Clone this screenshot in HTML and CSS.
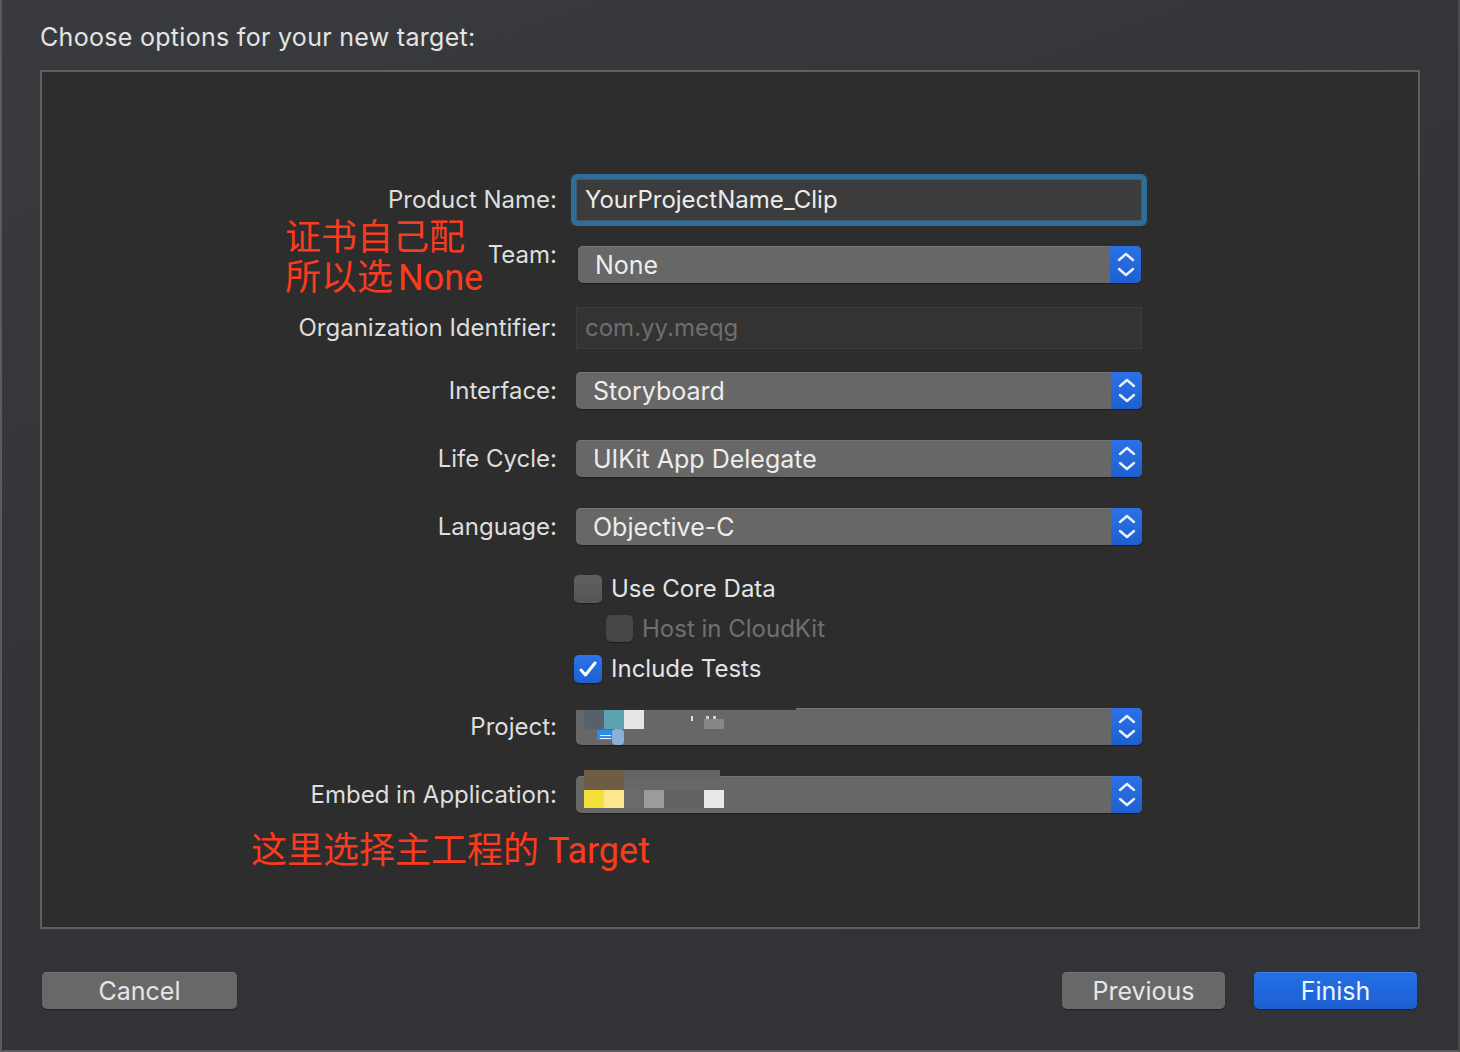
FILE: index.html
```html
<!DOCTYPE html>
<html lang="en">
<head>
    <meta charset="UTF-8">
    <meta name="viewport" content="width=device-width, initial-scale=1.0">
    <title>New Target</title>
    <link rel="stylesheet" href="styles.css">
</head>
<body>

<div class="sheet">
    <h1 class="sheet-title">Choose options for your new target:</h1>

    <div class="options-box">
        <div class="options-form">
            <div class="row row-field">
                <label class="row-label">Product Name:</label>
                <div class="text-field focused">YourProjectName_Clip</div>
            </div>

            <div class="row row-team">
                <label class="row-label label-raised">Team:</label>
                <div class="popup popup-team">
                    <span class="popup-value">None</span>
                    <span class="popup-arrows"><svg viewBox="0 0 31 37" width="31" height="37"><polyline points="9,14 16,8 23,14"/><polyline points="9,23 16,29 23,23"/></svg></span>
                </div>
            </div>

            <div class="row row-org">
                <label class="row-label">Organization Identifier:</label>
                <div class="text-field placeholder">com.yy.meqg</div>
            </div>

            <div class="row row-interface">
                <label class="row-label">Interface:</label>
                <div class="popup">
                    <span class="popup-value">Storyboard</span>
                    <span class="popup-arrows"><svg viewBox="0 0 31 37" width="31" height="37"><polyline points="9,14 16,8 23,14"/><polyline points="9,23 16,29 23,23"/></svg></span>
                </div>
            </div>

            <div class="row">
                <label class="row-label">Life Cycle:</label>
                <div class="popup">
                    <span class="popup-value">UIKit App Delegate</span>
                    <span class="popup-arrows"><svg viewBox="0 0 31 37" width="31" height="37"><polyline points="9,14 16,8 23,14"/><polyline points="9,23 16,29 23,23"/></svg></span>
                </div>
            </div>

            <div class="row">
                <label class="row-label">Language:</label>
                <div class="popup">
                    <span class="popup-value">Objective-C</span>
                    <span class="popup-arrows"><svg viewBox="0 0 31 37" width="31" height="37"><polyline points="9,14 16,8 23,14"/><polyline points="9,23 16,29 23,23"/></svg></span>
                </div>
            </div>

            <div class="row row-check row-check-first">
                <span></span>
                <div class="checkbox-line">
                    <span class="checkbox"></span>
                    <span>Use Core Data</span>
                </div>
            </div>

            <div class="row row-check row-check-sub">
                <span></span>
                <div class="checkbox-line disabled indented">
                    <span class="checkbox"></span>
                    <span>Host in CloudKit</span>
                </div>
            </div>

            <div class="row row-check row-check-last">
                <span></span>
                <div class="checkbox-line">
                    <span class="checkbox checked"><svg viewBox="0 0 28 28" width="28" height="28"><polyline points="7,15 11.5,20 21,8"/></svg></span>
                    <span>Include Tests</span>
                </div>
            </div>

            <div class="row row-project">
                <label class="row-label">Project:</label>
                <div class="popup">
                    <svg class="masked" viewBox="0 0 240 37" width="240" height="37">
                        <rect x="0" y="-1" width="220" height="3" fill="#2f2f2f"/>
                        <rect x="8" y="2" width="20" height="19" rx="4" fill="#56616c"/>
                        <rect x="28" y="2" width="20" height="19" fill="#5aa3ae"/>
                        <rect x="48" y="2" width="20" height="19" fill="#e6e6e8"/>
                        <rect x="21" y="22" width="16" height="10" fill="#2f8be8"/>
                        <rect x="24" y="27" width="11" height="1" fill="#e6f0ff"/>
                        <rect x="24" y="30" width="11" height="1" fill="#e6f0ff"/>
                        <rect x="36" y="21" width="12" height="16" rx="4" fill="#8bb0d6"/>
                        <rect x="115" y="8" width="2" height="5" fill="#e0e0e0"/>
                        <rect x="130" y="8" width="3" height="3" fill="#cfcfcf"/>
                        <rect x="137" y="8" width="3" height="3" fill="#cfcfcf"/>
                        <rect x="128" y="11" width="20" height="10" fill="#878787"/>
                    </svg>
                    <span class="popup-arrows"><svg viewBox="0 0 31 37" width="31" height="37"><polyline points="9,14 16,8 23,14"/><polyline points="9,23 16,29 23,23"/></svg></span>
                </div>
            </div>

            <div class="row row-embed">
                <label class="row-label">Embed in Application:</label>
                <div class="popup">
                    <svg class="masked" viewBox="0 -6 240 43" width="240" height="43">
                        <rect x="48" y="-6" width="96" height="8" fill="#636363"/>
                        <rect x="8" y="-6" width="40" height="20" fill="#6e5c45"/>
                        <rect x="8" y="14" width="20" height="18" fill="#f5dd3a"/>
                        <rect x="28" y="14" width="20" height="18" fill="#fde68e"/>
                        <rect x="48" y="14" width="20" height="18" fill="#6a6a6a"/>
                        <rect x="68" y="14" width="20" height="18" fill="#9b9b9b"/>
                        <rect x="88" y="14" width="40" height="18" fill="#626262"/>
                        <rect x="128" y="14" width="20" height="18" fill="#e8e8ea"/>
                    </svg>
                    <span class="popup-arrows"><svg viewBox="0 0 31 37" width="31" height="37"><polyline points="9,14 16,8 23,14"/><polyline points="9,23 16,29 23,23"/></svg></span>
                </div>
            </div>
        </div>

        <!-- annotations drawn over the screenshot -->
        <div class="note note-team">证书自己配<br>所以选<span class="note-latin">None</span></div>
        <div class="note note-embed">这里选择主工程的 Target</div>
    </div>

    <div class="sheet-footer">
        <button class="btn btn-cancel">Cancel</button>
        <div class="footer-right">
            <button class="btn btn-previous">Previous</button>
            <button class="btn btn-primary">Finish</button>
        </div>
    </div>
</div>

</body>
</html>
```

FILE: styles.css
```css
body {
    margin: 0;
    background-color: #333538;
    font-family: Inter, "Noto Sans", sans-serif;
    color: #e2e2e2;
}
.sheet {
    box-sizing: border-box;
    width: 1460px;
    height: 1052px;
    padding: 0 38px;
    border-left: 2px solid #5a5b5d;
    border-right: 2px solid #4a4b4d;
    border-bottom: 2px solid #5a5b5d;
    background: linear-gradient(160deg, #3a3b3e 0%, #333437 45%, #323336 100%);
}
.sheet-title {
    margin: 0;
    padding-top: 22px;
    font-size: 25px;
    font-weight: 400;
    line-height: 30px;
    letter-spacing: 0.3px;
    color: #e4e4e4;
}
.options-box {
    position: relative;
    box-sizing: border-box;
    height: 859px;
    margin-top: 18px;
    border: 2px solid #5f5f60;
    background-color: #2d2d2d;
}
.options-form {
    display: flex;
    flex-direction: column;
    padding-top: 107px;
}
.row {
    display: grid;
    grid-template-columns: 515px 566px;
    column-gap: 19px;
    align-items: center;
    margin-top: 31px;
}
.row-field { margin-top: 0; }
.row-team { margin-top: 25px; }
.row-org { margin-top: 24px; }
.row-interface { margin-top: 23px; }
.row-check-first { margin-top: 30px; }
.row-check-sub { margin-top: 12px; }
.row-check-last { margin-top: 13px; }
.row-project { margin-top: 25px; }
.row-label {
    text-align: right;
    font-size: 24px;
    line-height: 30px;
    color: #dedede;
}
.label-raised {
    position: relative;
    top: -10px;
}
.text-field {
    box-sizing: border-box;
    height: 42px;
    padding: 0 8px;
    font-size: 24px;
    line-height: 40px;
    border: 1px solid #3d3d3d;
    background-color: #333333;
}
.text-field.focused {
    background-color: #3c3c3c;
    color: #ececec;
    border-color: #3f5a6e;
    border-radius: 2px;
    box-shadow: 0 0 0 5px #2f6c98;
}
.text-field.placeholder {
    color: #6e6e6e;
}
.popup {
    position: relative;
    box-sizing: border-box;
    height: 37px;
    display: flex;
    align-items: center;
    border-radius: 5px;
    background-color: #676767;
    box-shadow: inset 0 1px 0 #757575, 0 1px 1px rgba(0, 0, 0, 0.35);
}
.popup-team {
    margin-left: 2px;
    margin-right: 1px;
}
.popup-value {
    padding-left: 17px;
    font-size: 25px;
    color: #ededed;
}
.popup-arrows {
    margin-left: auto;
    width: 31px;
    height: 37px;
    border-radius: 0 5px 5px 0;
    background: linear-gradient(#2b72e6, #1f5fcf);
}
.popup-arrows svg {
    display: block;
}
.popup-arrows polyline {
    fill: none;
    stroke: #eaf1ff;
    stroke-width: 2.4;
    stroke-linecap: round;
    stroke-linejoin: round;
}
.masked {
    position: absolute;
    left: 0;
    bottom: 0;
    overflow: visible;
}
.checkbox-line {
    display: flex;
    align-items: center;
    gap: 9px;
    height: 28px;
    margin-left: -2px;
    font-size: 24px;
    line-height: 28px;
    color: #e4e4e4;
}
.checkbox-line.indented {
    height: 27px;
    margin-left: 30px;
}
.checkbox-line.disabled {
    color: #707070;
}
.checkbox {
    box-sizing: border-box;
    width: 28px;
    height: 28px;
    border-radius: 5px;
    background: linear-gradient(#5f5f5f, #555555);
    box-shadow: 0 1px 1px rgba(0, 0, 0, 0.4);
}
.disabled .checkbox {
    width: 27px;
    height: 27px;
    background: #464646;
}
.checkbox.checked {
    background: linear-gradient(#2c74e8, #1f60d0);
}
.checkbox svg {
    display: block;
}
.checkbox polyline {
    fill: none;
    stroke: #ffffff;
    stroke-width: 3;
    stroke-linecap: round;
    stroke-linejoin: round;
}
.note {
    position: absolute;
    font-family: Roboto, "Noto Sans CJK SC", sans-serif;
    font-size: 36px;
    line-height: 40px;
    color: #fb3b1d;
}
.note-latin {
    margin-left: 5px;
}
.note-team {
    left: 243px;
    top: 146px;
}
.note-embed {
    left: 209px;
    top: 759px;
}
.sheet-footer {
    display: flex;
    justify-content: space-between;
    margin-top: 43px;
    padding: 0 3px 0 2px;
}
.footer-right {
    display: flex;
    gap: 29px;
}
.btn {
    box-sizing: border-box;
    height: 37px;
    border: none;
    border-radius: 5px;
    font-family: Inter, "Noto Sans", sans-serif;
    font-size: 25px;
    color: #e6e6e6;
    background-color: #686868;
    box-shadow: inset 0 1px 0 #747474, 0 1px 1px rgba(0, 0, 0, 0.35);
    cursor: pointer;
}
.btn-cancel {
    width: 195px;
}
.btn-previous {
    width: 163px;
}
.btn-primary {
    width: 163px;
    color: #f2f6ff;
    background: linear-gradient(#2370e6, #1d5fd2);
    box-shadow: inset 0 1px 0 #3c82ea, 0 1px 1px rgba(0, 0, 0, 0.35);
}
```
